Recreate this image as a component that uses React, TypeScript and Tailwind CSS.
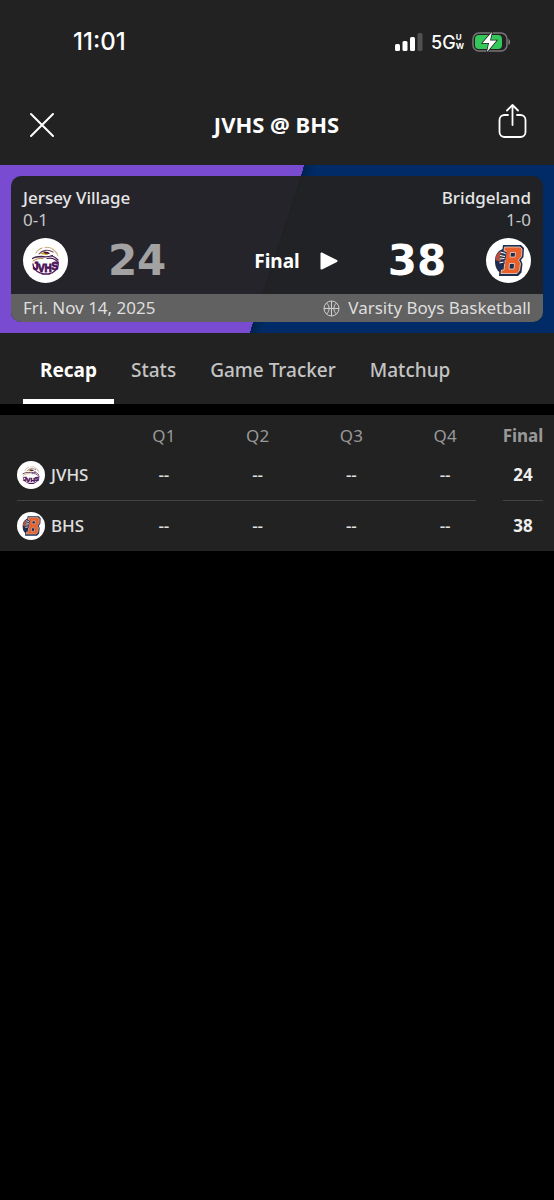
import { useState } from 'react';

const TABS = ['Recap', 'Stats', 'Game Tracker', 'Matchup'];
const QUARTERS = ['Q1', 'Q2', 'Q3', 'Q4'];

function JerseyVillageLogo({ className }: { className: string }) {
  return (
    <svg viewBox="0 0 45 45" className={className} role="img" aria-label="Jersey Village logo">
      <circle cx="22.5" cy="22.5" r="22.5" fill="#fff" />
      <g fill="none" strokeLinecap="round">
        <path d="M13 15c1-2 3-4 6-5" stroke="#a58a4a" strokeWidth="0.9" />
        <path d="M16 16c3-4 9-5 14-2" stroke="#6b4470" strokeWidth="1.1" />
        <path d="M9.500 20.500c3-2 6-2 9-2 3 .5 7 .5 11-1" stroke="#43204a" strokeWidth="1.3" />
        <path d="M10 23c3-2 6-3 10-2.500" stroke="#b98a3a" strokeWidth="1" />
        <path d="M22 9.500c3-.5 6 0 8 2l4 4M30 11c2 1 4 4 5 7" stroke="#c2a468" strokeWidth="0.9" />
        <path d="M24 20.500c4-1 8 0 11 4M28 18c3 0 5 2 7 4" stroke="#4d1c56" strokeWidth="1.2" />
        <path d="M10 26c0 4 3 7 7 9M35 24c1 4-1 8-6 11" stroke="#4d1058" strokeWidth="1.300" />
      </g>
      <path d="M17 15.500l5-2 5 1.500-3 2-4-.5z" fill="#d39a2c" />
      <path d="M20 13.500l5 .5 2 2-5-.5z" fill="#321334" />
      <path d="M16 34.500c4 1 10 1 14 0l-3.500 2.300h-7z" fill="#4d1058" />
      <g
        fill="#4d1058"
        stroke="#4d1058"
        strokeWidth="0.8"
        fontFamily="'Liberation Sans', sans-serif"
        fontSize="10"
        fontWeight="700"
      >
        <text x="10" y="32">J</text>
        <text x="15" y="34">V</text>
        <text x="21.500" y="34">H</text>
        <text x="28.500" y="32">S</text>
      </g>
    </svg>
  );
}

function BridgelandLogo({ className }: { className: string }) {
  return (
    <svg viewBox="0 0 45 45" className={className} role="img" aria-label="Bridgeland logo">
      <circle cx="22.5" cy="22.5" r="22.5" fill="#fff" />
      <path d="M17 11c-5 1-8 6-8 12 0 6 2 10 6 12l3-7V12z" fill="#1d2c4f" />
      <path d="M15.500 13c-4 1-6 4-6 9l5 2 2-5z" fill="#b5503c" />
      <path d="M17 7h18l3 3-.5 9-2.500 3 1.500 4-1 8.500-3.500 3.500H13l.5-7H16l1.500-17H16z" fill="#1d2c4f" />
      <path
        d="M18.500 9h15.500l2 2-.5 7.500-3 3.500 2 3.500-1 7-2.500 3H15l.5-3.500H18L20 13h-2z"
        fill="#e8602c"
        stroke="#f3d8ca"
        strokeWidth="0.8"
      />
      <path d="M24.500 14.500h5l-.4 4.500h-5zM23.500 25.500h5l-.5 5.500h-5z" fill="#1d2c4f" stroke="#f3d8ca" strokeWidth="0.8" />
      <path d="M14.500 14l6 1.500M14 17.500l6 1M13.500 21h6M13.500 25l5-.5" stroke="#1d2c4f" strokeWidth="2.600" />
      <path d="M14.500 14l5 1.500M14 17.500l5 1M13.500 21l5-.5M13.500 25l4-1" stroke="#fff" strokeWidth="1.200" />
    </svg>
  );
}

const TEAMS = [
  { short: 'JVHS', final: 24, Logo: JerseyVillageLogo },
  { short: 'BHS', final: 38, Logo: BridgelandLogo },
];

function StatusBar() {
  return (
    <div className="flex h-[84px] items-center justify-between pr-[43px] pl-[73px] font-['Inter',sans-serif] text-white">
      <span className="text-[24px] font-medium">11:01</span>
      <div className="flex items-center">
        <svg viewBox="0 0 28 18" className="h-[18px] w-7" aria-hidden="true">
          <rect x="0" y="11" width="5" height="7" rx="1.500" fill="#fff" />
          <rect x="7.500" y="8" width="5" height="10" rx="1.500" fill="#fff" />
          <rect x="15" y="4" width="5" height="14" rx="1.500" fill="#fff" />
          <rect x="22.500" y="0" width="5" height="18" rx="1.500" fill="#505050" />
        </svg>
        <span className="ml-2 text-[18px] font-medium">5G</span>
        <span className="flex flex-col text-[8px] leading-[9px] font-bold">
          <span>U</span>
          <span>W</span>
        </span>
        <svg viewBox="0 0 39 20" className="ml-2 h-5 w-[39px]" aria-hidden="true">
          <rect x="1" y="1" width="34" height="18" rx="6" fill="none" stroke="#777" strokeWidth="1.500" />
          <rect x="3" y="3" width="27" height="14" rx="4" fill="#34c759" />
          <path d="M36.500 7c2 1 2 5 0 6z" fill="#888" />
          <path d="M20 0L10.500 11h6.500L15 20l9.500-11.500H18z" fill="#fff" stroke="#222" strokeWidth="1.500" paintOrder="stroke" />
        </svg>
      </div>
    </div>
  );
}

function Header() {
  return (
    <header className="flex h-[81px] items-center justify-between pr-[27px] pl-[29px]">
      <button type="button" aria-label="Close" className="w-[26px]">
        <svg viewBox="0 0 26 26" className="size-[26px]" fill="none" stroke="#fff" strokeWidth="2" strokeLinecap="round">
          <path d="M2 2l22 22M24 2L2 24" />
        </svg>
      </button>
      <h1 className="text-[22px] font-bold">JVHS @ BHS</h1>
      <button type="button" aria-label="Share" className="mb-2">
        <svg
          viewBox="0 0 29 36"
          className="h-9 w-[29px]"
          fill="none"
          stroke="#fff"
          strokeWidth="1.800"
          strokeLinecap="round"
          strokeLinejoin="round"
        >
          <path d="M10 12H6.500A5 5 0 0 0 1.500 17v12a5 5 0 0 0 5 5h16a5 5 0 0 0 5-5V17a5 5 0 0 0-5-5H19" />
          <path d="M14.500 22V2M9 7.500L14.500 2 20 7.500" />
        </svg>
      </button>
    </header>
  );
}

function ScoreCard() {
  return (
    <section className="bg-[linear-gradient(108deg,#784bd0_50%,#00234f_50%,#002b66_52%)] p-[11px]">
      <div className="overflow-hidden rounded-[10px] bg-[#222222]/95">
        <div className="px-3 py-[11px]">
          <div className="flex justify-between text-[17px] leading-[22px]">
            <div>
              <h2 className="font-medium text-[#e6e6e6]">Jersey Village</h2>
              <p className="text-[#c8c8c8]">0-1</p>
            </div>
            <div className="text-right">
              <h2 className="font-medium text-[#e6e6e6]">Bridgeland</h2>
              <p className="text-[#c8c8c8]">1-0</p>
            </div>
          </div>
          <div className="mt-[7px] flex h-[45px] items-center">
            <JerseyVillageLogo className="size-[45px]" />
            <span className="flex-1 text-center font-['DejaVu_Sans',sans-serif] text-[42px] leading-[46px] font-bold text-[#a2a2a2]">
              24
            </span>
            <div className="grid grid-cols-[18px_auto_18px] items-center gap-x-5 px-2.5">
              <span className="col-start-2 pt-0.5 text-[19px] font-bold">Final</span>
              <button type="button" aria-label="Play">
                <svg viewBox="0 0 18 18" className="size-[18px]" aria-hidden="true">
                  <path d="M1.500 1.500v15L16.500 9z" fill="#fff" stroke="#fff" strokeWidth="2" strokeLinejoin="round" />
                </svg>
              </button>
            </div>
            <span className="flex-1 text-center font-['DejaVu_Sans',sans-serif] text-[42px] leading-[46px] font-bold">
              38
            </span>
            <BridgelandLogo className="size-[45px]" />
          </div>
        </div>
        <div className="flex h-7 items-center justify-between bg-[#616161] px-3 text-[17px] text-[#dedede]">
          <span>Fri. Nov 14, 2025</span>
          <span className="flex items-center gap-2">
            <svg viewBox="0 0 17 17" className="size-[17px]" fill="none" stroke="#cfcfcf" aria-hidden="true">
              <circle cx="8.500" cy="8.500" r="7.500" />
              <path d="M8.500 1v15M1 8.500h15M3.500 3c3.500 3 3.500 8 0 11M13.500 3c-3.500 3-3.500 8 0 11" />
            </svg>
            Varsity Boys Basketball
          </span>
        </div>
      </div>
    </section>
  );
}

function BoxScore() {
  return (
    <table className="w-full table-fixed border-collapse bg-[#222222] text-[17px]">
      <colgroup>
        <col className="w-[117px]" />
        {QUARTERS.map((q) => (
          <col key={q} />
        ))}
        <col className="w-[62px]" />
      </colgroup>
      <thead>
        <tr className="h-[35px] text-[#999999]">
          <td />
          {QUARTERS.map((q) => (
            <th key={q} scope="col" className="pt-1.5 font-normal">
              {q}
            </th>
          ))}
          <th scope="col" className="pt-1.5 font-bold">
            Final
          </th>
        </tr>
      </thead>
      {TEAMS.map(({ short, final, Logo }, i) => (
        <tbody key={short}>
          {i > 0 && (
            <tr aria-hidden="true">
              <td colSpan={5} className="pr-4 pl-[17px]">
                <div className="h-px bg-[#444444]" />
              </td>
              <td className="px-[11px]">
                <div className="h-px bg-[#444444]" />
              </td>
            </tr>
          )}
          <tr className="h-[50px]">
            <th scope="row" className="pl-[17px] font-medium text-[#e0e0e0]">
              <span className="flex items-center gap-1.5">
                <Logo className="size-7" />
                {short}
              </span>
            </th>
            {QUARTERS.map((q) => (
              <td key={q} className="text-center font-medium text-[#e0e0e0]">
                --
              </td>
            ))}
            <td className="text-center font-bold text-[#eeeeee]">{final}</td>
          </tr>
        </tbody>
      ))}
    </table>
  );
}

export default function App() {
  const [activeTab, setActiveTab] = useState('Recap');

  return (
    <div className="min-h-screen bg-black font-['Noto_Sans','Open_Sans',sans-serif] text-white">
      <div className="bg-[#222222]">
        <StatusBar />
        <Header />
        <ScoreCard />
        <nav className="flex h-[71px] pl-[23px]">
          {TABS.map((tab) => (
            <button
              key={tab}
              type="button"
              onClick={() => setActiveTab(tab)}
              className={`border-b-[5px] px-[17px] pt-2 text-[19px] ${
                activeTab === tab
                  ? 'border-b-white font-bold text-white'
                  : 'border-b-transparent font-medium text-[#c4c4c4]'
              }`}
            >
              {tab}
            </button>
          ))}
        </nav>
      </div>
      <main className="pt-[11px]">
        <BoxScore />
      </main>
    </div>
  );
}
